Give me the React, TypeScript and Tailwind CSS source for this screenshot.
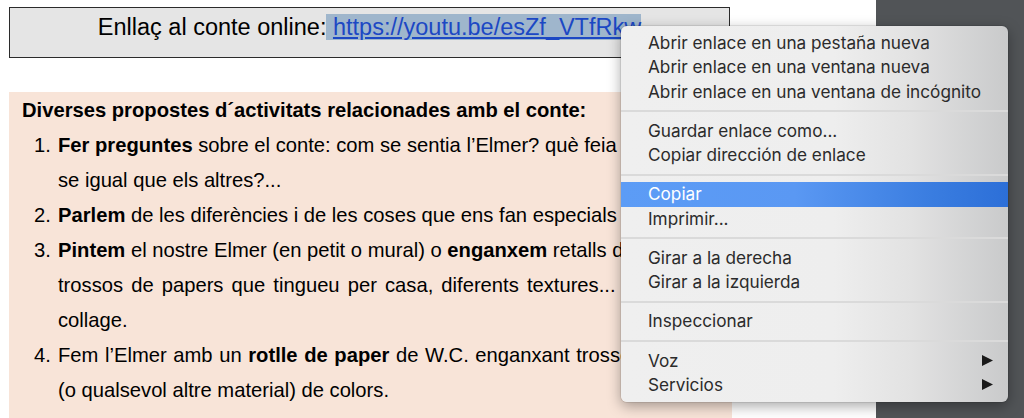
import React from 'react';

type MenuEntry = { label: string; active?: boolean; sub?: boolean } | 'sep';

const menu: MenuEntry[] = [
  { label: 'Abrir enlace en una pestaña nueva' },
  { label: 'Abrir enlace en una ventana nueva' },
  { label: 'Abrir enlace en una ventana de incógnito' },
  'sep',
  { label: 'Guardar enlace como...' },
  { label: 'Copiar dirección de enlace' },
  'sep',
  { label: 'Copiar', active: true },
  { label: 'Imprimir...' },
  'sep',
  { label: 'Girar a la derecha' },
  { label: 'Girar a la izquierda' },
  'sep',
  { label: 'Inspeccionar' },
  'sep',
  { label: 'Voz', sub: true },
  { label: 'Servicios', sub: true },
];

const ContextMenu: React.FC = () => (
  <div className="absolute left-[621px] top-[26px] w-[387px] rounded-[6px] pt-[5px] pb-[5px] bg-[linear-gradient(90deg,#efefef_0%,#eeeeee_55%,#e2e2e2_75%,#c9cacb_100%)] shadow-[0_4px_14px_rgba(0,0,0,0.35),0_0_0_1px_rgba(0,0,0,0.08)] font-['Inter','Noto_Sans',sans-serif] text-[17.2px] text-[#2b2b2b]">
    {menu.map((item, i) =>
      item === 'sep' ? (
        <div key={i} className="h-[15px] flex items-center">
          <div className="h-[2px] w-full bg-[#dadada]" />
        </div>
      ) : (
        <div
          key={i}
          className={
            'h-[24.25px] flex items-center justify-between pl-[27px] pr-[15px] ' +
            (item.active ? 'bg-[linear-gradient(90deg,#5c9cf6_0%,#5a98f3_45%,#3a7de0_80%,#2c6fd8_100%)] text-white' : '')
          }
        >
          <span>{item.label}</span>
          {item.sub && (
            <svg width="11" height="11" viewBox="0 0 11 11">
              <polygon points="0,0 11,5.5 0,11" fill="#1a1a1a" />
            </svg>
          )}
        </div>
      )
    )}
  </div>
);

const Item: React.FC<{ n: number; children: React.ReactNode }> = ({ n, children }) => (
  <div className="flex">
    <div className="w-[24px] shrink-0">{n}.</div>
    <div className="whitespace-nowrap">{children}</div>
  </div>
);

const App: React.FC = () => {
  return (
    <div className="relative flex h-[418px] w-[1024px] overflow-hidden bg-white font-['Liberation_Sans',Arial,sans-serif] text-black">
      <div className="w-[876px] shrink-0 flex flex-col">
        <div className="ml-[9px] mt-[7px] w-[721px] h-[51px] border border-[#2b2b2b] bg-[#e5e5e5] pt-[6px] text-center text-[23.5px] leading-[26px]">
          Enllaç al conte online:
          <span className="bg-[#9fb6cc]">
            {' '}
            <a className="text-[#1c48c4] underline underline-offset-[2px]">https://youtu.be/esZf_VTfRkw</a>
          </span>
        </div>

        <div className="ml-[9px] mt-[34px] w-[723px] flex-1 overflow-hidden bg-[#f8e4d8] pt-[1px] pl-[13px] text-[20.2px] leading-[35px]">
          <div className="font-bold whitespace-nowrap">Diverses propostes d´activitats relacionades amb el conte:</div>
          <div className="ml-[12px]">
            <Item n={1}>
              <div>
                <b>Fer preguntes</b> sobre el conte: com se sentia l’Elmer? què feia per sentir-
              </div>
              <div>se igual que els altres?...</div>
            </Item>
            <Item n={2}>
              <div>
                <b>Parlem</b> de les diferències i de les coses que ens fan especials a cadascú.
              </div>
            </Item>
            <Item n={3}>
              <div>
                <b>Pintem</b> el nostre Elmer (en petit o mural) o <b>enganxem</b> retalls de
              </div>
              <div className="[word-spacing:2.5px]">trossos de papers que tingueu per casa, diferents textures... i fem un</div>
              <div>collage.</div>
            </Item>
            <Item n={4}>
              <div className="[word-spacing:1px]">
                Fem l’Elmer amb un <b>rotlle de paper</b> de W.C. enganxant trossets
              </div>
              <div>(o qualsevol altre material) de colors.</div>
            </Item>
          </div>
        </div>
      </div>
      <div className="flex-1 bg-[#515457]" />
      <ContextMenu />
    </div>
  );
};

export default App;
